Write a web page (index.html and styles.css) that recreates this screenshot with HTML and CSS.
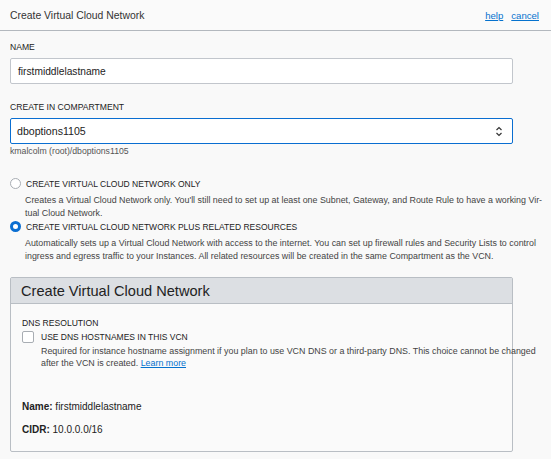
FILE: index.html
```html
<!DOCTYPE html>
<html>
<head>
<meta charset="utf-8">
<link rel="stylesheet" href="styles.css">
</head>
<body>
<div class="page">
  <div class="topbar">
    <span class="title">Create Virtual Cloud Network</span>
    <span class="links"><a href="#">help</a><a href="#">cancel</a></span>
  </div>
  <div class="content">
    <div class="label l-name">NAME</div>
    <div class="input">firstmiddlelastname</div>
    <div class="label l-comp">CREATE IN COMPARTMENT</div>
    <div class="input select">dboptions1105
      <svg class="chev" width="8" height="13" viewBox="0 0 8 13"><path d="M1.5 5 L4 2.5 L6.5 5 M1.5 8 L4 10.5 L6.5 8" fill="none" stroke="#333" stroke-width="1.2"/></svg>
    </div>
    <div class="hint">kmalcolm (root)/dboptions1105</div>

    <div class="option o1">
      <div class="optrow"><span class="radio"></span><span class="optlabel">CREATE VIRTUAL CLOUD NETWORK ONLY</span></div>
      <div class="desc">Creates a Virtual Cloud Network only. You'll still need to set up at least one Subnet, Gateway, and Route Rule to have a working Vir-<br>tual Cloud Network.</div>
    </div>
    <div class="option o2">
      <div class="optrow"><span class="radio on"></span><span class="optlabel">CREATE VIRTUAL CLOUD NETWORK PLUS RELATED RESOURCES</span></div>
      <div class="desc">Automatically sets up a Virtual Cloud Network with access to the internet. You can set up firewall rules and Security Lists to control<br>ingress and egress traffic to your Instances. All related resources will be created in the same Compartment as the VCN.</div>
    </div>

    <div class="box">
      <div class="boxhead">Create Virtual Cloud Network</div>
      <div class="boxbody">
        <div class="label l-dns">DNS RESOLUTION</div>
        <div class="checkrow"><span class="check"></span><span class="optlabel">USE DNS HOSTNAMES IN THIS VCN</span></div>
        <div class="desc cdesc">Required for instance hostname assignment if you plan to use VCN DNS or a third-party DNS. This choice cannot be changed<br>after the VCN is created. <a href="#">Learn more</a></div>
        <div class="kv k1"><b>Name:</b> firstmiddlelastname</div>
        <div class="kv k2"><b>CIDR:</b> 10.0.0.0/16</div>
      </div>
    </div>
  </div>
</div>
</body>
</html>
```
FILE: styles.css
```css
* { box-sizing: border-box; }
html, body { margin: 0; padding: 0; }
body {
  background: #f9f9f9;
  font-family: "Liberation Sans", Arial, sans-serif;
  color: #222;
  width: 551px;
  height: 459px;
  overflow: hidden;
}
a { color: #0572ce; }
.topbar {
  height: 31px;
  background: #fafafa;
  border-bottom: 1px solid #b3b8be;
  display: flex;
  align-items: center;
  justify-content: space-between;
  padding: 0 12px 0 10px;
  font-size: 10.4px;
}
.topbar .title { color: #333; }
.links { display: flex; gap: 8px; font-size: 9.6px; }
.links a { color: #0572ce; text-decoration: underline; }
.content { padding: 0 0 0 10px; }
.label { font-size: 8.6px; color: #222; line-height: 12px; }
.l-name { margin-top: 10px; }
.input {
  width: 503px;
  height: 26px;
  background: #fff;
  border: 1px solid #c2c6cc;
  border-radius: 2px;
  font-size: 10.2px;
  color: #222;
  display: flex;
  align-items: center;
  padding-left: 7px;
  margin-top: 5px;
}
.l-comp { margin-top: 17px; }
.select {
  border-color: #0a6ed1;
  position: relative;
  font-size: 10.6px;
  padding-left: 6px;
}
.chev { position: absolute; right: 9px; top: 6px; }
.hint { font-size: 8.7px; color: #555; margin-top: 1px; line-height: 12px; }
.o1 { margin-top: 20px; }
.o2 { margin-top: 0; }
.optrow, .checkrow { display: flex; align-items: center; height: 13px; }
.radio {
  width: 11px; height: 11px;
  border-radius: 50%;
  border: 1px solid #a8adb3;
  background: #fff;
  margin-right: 5px;
  flex: none;
}
.radio.on {
  border: 3.5px solid #0a6ed1;
  background: #fff;
}
.optlabel { font-size: 8.5px; color: #222; }
.desc {
  font-size: 8.9px;
  color: #444;
  line-height: 13px;
  margin-top: 4px;
  padding-left: 15px;
  white-space: nowrap;
}
.box {
  margin-top: 14px;
  width: 503px;
  border: 1px solid #b9bec4;
  border-radius: 2px;
  background: #fafafa;
  height: 175px;
}
.boxhead {
  height: 26px;
  background: #dcdfe3;
  border-bottom: 1px solid #b9bec4;
  font-size: 14.6px;
  color: #222;
  padding-left: 10px;
  display: flex;
  align-items: center;
}
.boxbody { padding-left: 11px; }
.l-dns { margin-top: 13px; }
.checkrow { margin-top: 2px; height: 12px; }
.check {
  width: 12px; height: 12px;
  border: 1px solid #a8adb3;
  border-radius: 2px;
  background: #fff;
  margin-right: 7px;
  flex: none;
}
.cdesc { padding-left: 19px; margin-top: 2px; line-height: 12px; }
.cdesc a { text-decoration: underline; }
.kv { font-size: 10px; color: #222; line-height: 13px; }
.k1 { margin-top: 31px; }
.k2 { margin-top: 10px; }
```
